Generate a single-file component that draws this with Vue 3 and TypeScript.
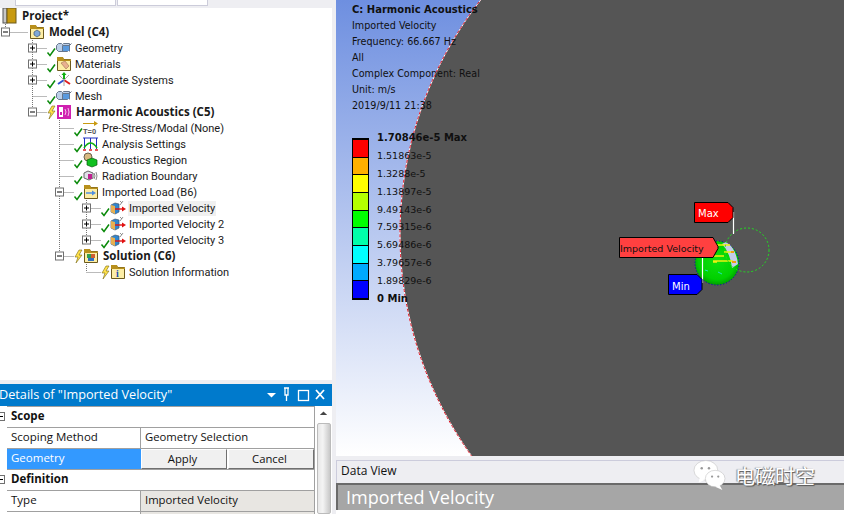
<script setup lang="ts">
interface TreeRow {
  level: number
  label: string
  icon: string
  toggle?: 'plus' | 'minus'
  status?: 'check' | 'bolt'
  bold?: boolean
  selected?: boolean
}

const rows: TreeRow[] = [
  { level: -1, label: 'Project*', icon: 'book', bold: true },
  { level: 0, label: 'Model (C4)', icon: 'model', toggle: 'minus', bold: true },
  { level: 1, label: 'Geometry', icon: 'cubes', toggle: 'plus', status: 'check' },
  { level: 1, label: 'Materials', icon: 'materials', toggle: 'plus', status: 'check' },
  { level: 1, label: 'Coordinate Systems', icon: 'axes', toggle: 'plus', status: 'check' },
  { level: 1, label: 'Mesh', icon: 'cubes', status: 'check' },
  { level: 1, label: 'Harmonic Acoustics (C5)', icon: 'harmonic', toggle: 'minus', status: 'bolt', bold: true },
  { level: 2, label: 'Pre-Stress/Modal (None)', icon: 'prestress', status: 'check' },
  { level: 2, label: 'Analysis Settings', icon: 'settings', status: 'check' },
  { level: 2, label: 'Acoustics Region', icon: 'region', status: 'check' },
  { level: 2, label: 'Radiation Boundary', icon: 'radiation', status: 'check' },
  { level: 2, label: 'Imported Load (B6)', icon: 'load', toggle: 'minus', status: 'check' },
  { level: 3, label: 'Imported Velocity', icon: 'velocity', toggle: 'plus', status: 'check', selected: true },
  { level: 3, label: 'Imported Velocity 2', icon: 'velocity', toggle: 'plus', status: 'check' },
  { level: 3, label: 'Imported Velocity 3', icon: 'velocity', toggle: 'plus', status: 'check' },
  { level: 2, label: 'Solution (C6)', icon: 'solution', toggle: 'minus', status: 'bolt', bold: true },
  { level: 3, label: 'Solution Information', icon: 'info', status: 'bolt' }
]

const elbowX = (level: number) => 5.5 + 27 * level
const iconX = (level: number) => 29 + 27 * level

// true when another sibling at this level still follows row i
const continues = (i: number, level: number) => {
  for (let k = i + 1; k < rows.length; k++) {
    if (rows[k].level < level) return false
    if (rows[k].level === level) return true
  }
  return false
}

const guidePath = (i: number) => {
  const row = rows[i]
  if (row.level < 0) return ''
  let d = ''
  for (let a = 0; a < row.level; a++) {
    if (continues(i, a)) d += `M${elbowX(a)} 0V16`
  }
  const x = elbowX(row.level)
  d += `M${x} 0V${continues(i, row.level) ? 16 : 8}`
  d += `M${x} 8.5H${iconX(row.level) - (row.status ? 9 : 1)}`
  return d
}

const scale = ['#ff0000', '#ffb000', '#ffff00', '#b4ff00', '#00ff00', '#00ffaa', '#00ffff', '#00aaff', '#0000ff']
const legend = [
  '1.70846e-5 Max', '1.51863e-5', '1.3288e-5', '1.13897e-5', '9.49143e-6',
  '7.59315e-6', '5.69486e-6', '3.79657e-6', '1.89829e-6', '0 Min'
]
const info = [
  'Imported Velocity', 'Frequency: 66.667 Hz', 'All',
  'Complex Component: Real', 'Unit: m/s', '2019/9/11 21:38'
]
</script>

<template>
  <div class="app">
    <svg class="defs" width="0" height="0">
      <defs>
        <symbol id="folder" viewBox="0 0 16 16">
          <path d="M1.5 3.5V1.5h5l1 2h7v11h-13z" fill="#fdeea6" stroke="#6d5a1c" />
          <path d="M1 1h6l1 2.5h7V5H1z" fill="#b8901c" />
        </symbol>
        <symbol id="book" viewBox="0 0 16 16">
          <rect x="1" y="0" width="4" height="15" fill="#c8c8c8" stroke="#555" />
          <rect x="5" y="0" width="9" height="15" fill="#c89a10" stroke="#6d5a1c" />
        </symbol>
        <symbol id="cube" viewBox="0 0 16 16">
          <path d="M0.500 5.500l2-2h3l1 1 1-1h6v6l-2 2H2.500l-2-2z" fill="#bccfe8" stroke="#66768c" />
          <path d="M6.500 5.500h7v6M13.500 5.500l2-2M6.500 5.500v6" fill="none" stroke="#66768c" />
          <rect x="7" y="6" width="6" height="5" fill="#5a9ade" />
        </symbol>
      </defs>
    </svg>

    <div class="left">
      <div class="top-strip">
        <div class="strip-box first"></div>
        <div class="strip-box"></div>
      </div>

      <div class="tree">
        <div v-for="(row, i) in rows" :key="i" class="tree-row">
          <svg class="gutter" :width="iconX(row.level) + 16" height="16">
            <path :d="guidePath(i)" class="guide" />
            <g v-if="row.toggle" :transform="`translate(${elbowX(row.level) - 4.5} 3.5)`">
              <rect x="0.5" y="0.5" width="8" height="8" fill="#fff" stroke="#707070" />
              <path d="M2 4.500h5" stroke="#000" />
              <path v-if="row.toggle === 'plus'" d="M4.500 2v5" stroke="#000" />
            </g>
            <g v-if="row.status" :transform="`translate(${iconX(row.level) - 9} 0)`">
              <path
                v-if="row.status === 'check'"
                d="M0.500 12.500l2.500 3 5-7"
                fill="none"
                stroke="#0a8a0a"
                stroke-width="1.500"
              />
              <path
                v-else
                d="M5 2L1 9h3l-2 6 6-8H5l3-5z"
                fill="#ffe14a"
                stroke="#7a6a10"
                stroke-width="0.600"
              />
            </g>
            <g :transform="`translate(${iconX(row.level)} 0)`">
              <use v-if="row.icon === 'book'" href="#book" width="16" height="16" />
              <template v-else-if="row.icon === 'model'">
                <use href="#folder" width="16" height="16" />
                <path d="M5 8l3-2 3 2v3l-3 2-3-2z" fill="#7fa8d8" stroke="#44566c" stroke-width="0.700" />
              </template>
              <use v-else-if="row.icon === 'cubes'" href="#cube" width="16" height="16" />
              <template v-else-if="row.icon === 'materials'">
                <use href="#folder" width="16" height="16" />
                <path d="M5 7l4-2 4 5-3 3z" fill="#e8b090" stroke="#a07050" stroke-width="0.600" />
              </template>
              <template v-else-if="row.icon === 'axes'">
                <path d="M8 8V2" stroke="#10b010" stroke-width="2" />
                <path d="M8 0l2.500 3h-5z" fill="#10b010" />
                <path d="M8 8l6 4" stroke="#e02020" stroke-width="2" />
                <path d="M8 8l-6 4" stroke="#3050d0" stroke-width="2" />
                <path d="M8 8L3 3M8 8l5-5M8 8v6" stroke="#a8a8a8" />
              </template>
              <template v-else-if="row.icon === 'harmonic'">
                <rect x="1" y="1" width="14" height="14" fill="#d020b0" />
                <rect x="3" y="3" width="4" height="10" fill="#fff" />
                <rect x="4" y="8" width="2" height="3" fill="#d020b0" />
                <path d="M9 5q2 3 0 6M12 4q2 4 0 8" fill="none" stroke="#f4c0ea" />
              </template>
              <template v-else-if="row.icon === 'prestress'">
                <path d="M0 3.500h12" stroke="#c89a10" />
                <path d="M11 1l4 2.500-4 2.500z" fill="#c89a10" />
                <text x="0" y="14" class="t0">T=0</text>
              </template>
              <template v-else-if="row.icon === 'settings'">
                <path d="M1.500 2v11M7.500 2v11M13.500 2v11M0 2h15" stroke="#2030c0" />
                <path d="M1 12q6.500-10 13 0" fill="none" stroke="#10b010" stroke-width="1.500" />
                <path d="M0 14h3M6 14h3M12 14h3" stroke="#e02020" stroke-width="1.500" />
              </template>
              <template v-else-if="row.icon === 'region'">
                <circle cx="5" cy="5" r="4" fill="#d8b880" stroke="#6b6050" />
                <path d="M4 8l5-2 5 2v5l-5 2-5-2z" fill="#10c020" stroke="#0a5a10" stroke-width="0.700" />
              </template>
              <template v-else-if="row.icon === 'radiation'">
                <path d="M1 5l4-2 5 2v5l-4 2-5-2z" fill="#e0e0e8" stroke="#666" />
                <rect x="5" y="6" width="4" height="5" fill="#c02090" />
                <path d="M11 5q2 3 0 6M13 4q2 4 0 8" fill="none" stroke="#888" />
              </template>
              <template v-else-if="row.icon === 'load'">
                <use href="#folder" width="16" height="16" />
                <path d="M3 9h7" stroke="#4f8fe0" stroke-width="1.500" />
                <path d="M9 6.500l4 2.500-4 2.500z" fill="#4f8fe0" />
              </template>
              <template v-else-if="row.icon === 'velocity'">
                <path d="M1 5l4-2 4 1v8l-4 2-4-2z" fill="#2f86d0" stroke="#44566c" stroke-width="0.700" />
                <path d="M1 5v7l4 2V6z" fill="#e8b050" />
                <path d="M5 9h9" stroke="#e01010" stroke-width="1.400" />
                <path d="M12 6.500l4 2.500-4 2.500z" fill="#e01010" />
                <path d="M10 1l2 2M13 1l-3 4" stroke="#777" stroke-width="0.800" />
              </template>
              <template v-else-if="row.icon === 'solution'">
                <use href="#folder" width="16" height="16" />
                <rect x="4" y="6" width="4" height="4" fill="#30a050" />
                <rect x="8" y="6" width="4" height="4" fill="#d06030" />
                <rect x="5" y="10" width="6" height="3" fill="#3070c0" />
              </template>
              <template v-else-if="row.icon === 'info'">
                <use href="#folder" width="16" height="16" />
                <text x="6" y="13" class="info-i">i</text>
              </template>
            </g>
          </svg>
          <span class="tree-label" :class="{ bold: row.bold, selected: row.selected }">{{ row.label }}</span>
        </div>
      </div>

      <div class="details">
        <div class="details-head">
          <span class="details-title">Details of "Imported Velocity"</span>
          <span class="grip"></span>
          <svg width="66" height="22" viewBox="0 0 66 22" class="details-tools">
            <path d="M1 9h9l-4.500 4.500z" fill="#fff" />
            <path d="M18 4h5M19 4v7h3V4M20.500 11v6" fill="none" stroke="#fff" stroke-width="1.300" />
            <rect x="32.500" y="6.500" width="10" height="10" fill="none" stroke="#fff" stroke-width="1.300" />
            <path d="M50 6l8 9M58 6l-8 9" stroke="#fff" stroke-width="1.800" />
          </svg>
        </div>
        <div class="details-body">
          <div class="gutter-col">
            <span class="mini"></span>
            <span class="mini second"></span>
          </div>
          <div class="grid">
            <div class="section">Scope</div>
            <div class="cell name">Scoping Method</div>
            <div class="cell">Geometry Selection</div>
            <div class="cell name active">Geometry</div>
            <div class="cell buttons">
              <button class="btn">Apply</button>
              <button class="btn">Cancel</button>
            </div>
            <div class="section">Definition</div>
            <div class="cell name">Type</div>
            <div class="cell readonly">Imported Velocity</div>
            <div class="cell name"></div>
            <div class="cell readonly"></div>
          </div>
          <div class="scrollbar">
            <svg width="15" height="16" viewBox="0 0 15 16">
              <path d="M3.500 10l4-4 4 4z" fill="#444" />
            </svg>
            <div class="thumb"></div>
          </div>
        </div>
      </div>
    </div>

    <div class="right">
      <div class="viewport">
        <svg class="scene" width="508" height="456" viewBox="336 0 508 456">
          <defs>
            <linearGradient id="sky" x1="0" y1="0" x2="0" y2="1">
              <stop offset="0" stop-color="#6e8fe0" />
              <stop offset="1" stop-color="#ffffff" />
            </linearGradient>
            <radialGradient id="ball" cx="0.5" cy="0.45" r="0.6">
              <stop offset="0" stop-color="#10e010" />
              <stop offset="0.7" stop-color="#00d000" />
              <stop offset="1" stop-color="#008a00" />
            </radialGradient>
          </defs>
          <rect x="336" y="0" width="508" height="456" fill="url(#sky)" />
          <circle cx="780" cy="234" r="380" fill="#555555" />
          <circle cx="780" cy="234" r="380" fill="none" stroke="#fff" />
          <circle cx="780" cy="234" r="380" fill="none" stroke="#e01020" stroke-dasharray="3 2" />

          <circle cx="717" cy="263" r="22" fill="url(#ball)" stroke="#0000c0" stroke-dasharray="1 2" />
          <path d="M726 242q10 6 12 22l-6 4q-2-16-10-24z" fill="#c4cce8" />
          <path d="M716 245h14M712 256h12M713 262h4M713 261h20M724 252h8" stroke="#f0f010" stroke-width="1.500" />
          <path d="M731 252h3M732 262h4" stroke="#f0a010" stroke-width="2" />
          <path d="M718 272l4 2M705 270l3 1" stroke="#20e0c0" />
          <circle cx="747" cy="250" r="22" fill="none" stroke="#20e020" stroke-dasharray="2 2" />

          <path d="M733.500 212V234" stroke="#fff" stroke-width="1.200" />
          <path d="M702.500 245V283" stroke="#fff" stroke-width="1.200" />
          <path d="M706 242h4" stroke="#fff" stroke-width="1.200" />

          <path d="M694.500 202.500H728l5 5v10l-5 5H694.500z" fill="#ff0000" stroke="#000" />
          <text x="698" y="217" class="flag white">Max</text>

          <path d="M619.500 237.500H713l5 9v2l-5 9H619.500z" fill="#ff4040" stroke="#000" />
          <text x="620" y="252" class="flag">Imported Velocity</text>

          <path d="M668.500 274.500H697l5 5v10l-5 5H668.500z" fill="#0000ff" stroke="#000" />
          <text x="672" y="290" class="flag white">Min</text>
        </svg>

        <div class="annotation">
          <div class="ann-title">C: Harmonic Acoustics</div>
          <div v-for="line in info" :key="line" class="ann-line">{{ line }}</div>
        </div>

        <div class="legend">
          <div class="bar">
            <span v-for="c in scale" :key="c" class="band" :style="{ background: c }"></span>
          </div>
          <div class="ticks">
            <span v-for="(t, i) in legend" :key="t" class="tick" :class="{ strong: i === 0 || i === 9 }">{{ t }}</span>
          </div>
        </div>
      </div>

      <div class="data-view">
        <div class="dv-head">
          <span>Data View</span>
          <span class="grip dark"></span>
        </div>
        <div class="dv-title">Imported Velocity</div>
        <div class="watermark">
          <svg width="34" height="31" viewBox="0 0 32 30">
            <ellipse cx="12" cy="10" rx="11.500" ry="9.500" fill="#fff" stroke="#bbb" stroke-width="0.500" />
            <path d="M6 17l-1 5 6-3z" fill="#fff" />
            <circle cx="8" cy="8" r="1.200" fill="#999" />
            <circle cx="15" cy="8" r="1.200" fill="#999" />
            <ellipse cx="21" cy="18" rx="9.500" ry="8" fill="#fff" stroke="#bbb" stroke-width="0.500" />
            <path d="M25 24l3 5-7-3z" fill="#fff" />
            <circle cx="18" cy="16" r="1.100" fill="#999" />
            <circle cx="24" cy="16" r="1.100" fill="#999" />
          </svg>
          <span class="wm-text">电磁时空</span>
        </div>
      </div>
    </div>
  </div>
</template>

<style scoped>
.app {
  width: 844px;
  height: 514px;
  display: grid;
  grid-template-columns: 336px 508px;
  background: #eeeef2;
  overflow: hidden;
  font-family: "Open Sans", "Liberation Sans", sans-serif;
  font-size: 11.5px;
  color: #111;
  position: relative;
}

.defs {
  position: absolute;
}

.left {
  display: flex;
  flex-direction: column;
  width: 332px;
  height: 514px;
}

.top-strip {
  height: 8px;
  display: flex;
  padding-left: 15px;
}

.strip-box {
  width: 89px;
  height: 5px;
  background: #fff;
  border: 1px solid #ccccda;
  border-top: 0;
  margin-right: 1px;
}

.strip-box.first {
  width: 99px;
}

.tree {
  height: 372px;
  background: #fff;
}

.tree-row {
  display: flex;
  height: 16px;
  align-items: center;
  white-space: nowrap;
  line-height: 15px;
}

.gutter {
  flex: none;
  overflow: visible;
}

.guide {
  fill: none;
  stroke: #777;
  stroke-dasharray: 1 1;
}

.tree-label {
  margin-left: 2px;
  padding: 0 1px;
  color: #1a1a1a;
  font-family: Roboto, sans-serif;
  font-size: 11px;
}

.tree-label.bold {
  font-family: "Open Sans", sans-serif;
  font-size: 11.5px;
  font-weight: 700;
  margin-left: 3px;
  margin-bottom: 2px;
}

.tree-label.selected {
  background: #f0f0f0;
}

.t0 {
  font: 700 7.500px "Liberation Sans", sans-serif;
  fill: #555;
}

.info-i {
  font: 700 10px "Liberation Serif", serif;
  fill: #2050b0;
}

.details {
  margin-top: 4px;
  height: 130px;
  background: #fff;
  display: flex;
  flex-direction: column;
}

.details-head {
  height: 22px;
  background: #007acc;
  display: flex;
  align-items: center;
  color: #fff;
  font-size: 12.700px;
  flex: none;
}

.details-title {
  white-space: nowrap;
  margin-left: -1px;
  margin-bottom: 2px;
}

.grip {
  flex: 1;
  height: 6px;
  margin: 0 2px 0 6px;
  background-image: radial-gradient(rgba(255, 255, 255, 0.55) 0.6px, transparent 0.7px);
  background-size: 2px 2px;
}

.details-tools {
  flex: none;
}

.details-body {
  flex: 1;
  display: flex;
  min-height: 0;
}

.gutter-col {
  width: 7px;
  flex: none;
  position: relative;
}

.mini {
  position: absolute;
  left: -4px;
  top: 6px;
  width: 9px;
  height: 9px;
  box-sizing: border-box;
  border: 1px solid #707070;
  background: linear-gradient(#000, #000) center / 5px 1px no-repeat #fff;
}

.mini.second {
  top: 69px;
}

.grid {
  width: 308px;
  flex: none;
  display: grid;
  grid-template-columns: 134px 174px;
  grid-auto-rows: 21px;
  border-top: 1px solid #a0a0a0;
  overflow: hidden;
  align-content: start;
}

.section {
  grid-column: 1 / 3;
  font-weight: 700;
  padding-left: 4px;
  line-height: 18px;
  border-bottom: 1px solid #a0a0a0;
  border-right: 1px solid #a0a0a0;
  box-sizing: border-box;
}

.cell {
  padding-left: 4px;
  line-height: 18px;
  border-bottom: 1px solid #a0a0a0;
  border-right: 1px solid #a0a0a0;
  box-sizing: border-box;
  white-space: nowrap;
  font-size: 11.300px;
}

.cell.name {
  padding-left: 4px;
  font-size: 11.500px;
}

.cell.active {
  background: #3399ff;
  color: #fff;
  border-right: 0;
}

.cell.readonly {
  background: #e8e6e2;
}

.cell.buttons {
  display: flex;
  padding: 0;
  gap: 1px;
}

.btn {
  flex: 1;
  font: inherit;
  padding: 0 3px 3px 0;
  height: 20px;
  color: #111;
  background: #f0f0f0;
  border: 1px solid;
  border-color: #fff #707070 #707070 #fff;
}

.scrollbar {
  width: 15px;
  margin-left: 1px;
  flex: none;
  display: flex;
  flex-direction: column;
  align-items: center;
}

.thumb {
  width: 14px;
  height: 100px;
  margin-top: 2px;
  background: linear-gradient(90deg, #e8e8e8, #f4f4f4 40%, #c8c8c8);
  border: 1px solid #bbb;
  border-radius: 2px;
  box-sizing: border-box;
}

.right {
  display: flex;
  flex-direction: column;
  height: 514px;
}

.viewport {
  height: 456px;
  position: relative;
  overflow: hidden;
  flex: none;
}

.scene {
  display: block;
}

.flag {
  font: 9.500px "DejaVu Sans", sans-serif;
  fill: #111;
}

.flag.white {
  fill: #fff;
  font-size: 10px;
}

.annotation {
  position: absolute;
  left: 16px;
  top: 2px;
  font-family: "DejaVu Sans", sans-serif;
  font-size: 9.600px;
  line-height: 16px;
  color: #101010;
}

.ann-title {
  font-weight: 700;
  font-size: 10px;
}

.legend {
  position: absolute;
  left: 16px;
  top: 138px;
  display: flex;
}

.bar {
  width: 17px;
  display: flex;
  flex-direction: column;
  border: 1px solid #000;
  border-top-width: 2px;
  border-bottom-width: 2px;
  box-sizing: border-box;
  height: 162px;
}

.band {
  flex: 1;
  border-bottom: 1px solid #000;
}

.band:last-child {
  border-bottom: 0;
}

.ticks {
  margin-left: 8px;
  margin-top: -9px;
  display: flex;
  flex-direction: column;
  font-family: "DejaVu Sans", sans-serif;
  font-size: 9.500px;
  color: #101010;
}

.tick {
  height: 17.900px;
  line-height: 18px;
  white-space: nowrap;
}

.tick.strong {
  font-weight: 700;
  font-size: 10px;
}

.data-view {
  margin-top: 4px;
  position: relative;
  flex: 1;
  background: #fff;
  display: flex;
  flex-direction: column;
}

.dv-head {
  height: 23px;
  flex: none;
  background: #eeeef2;
  border-top: 1px solid #ccccdc;
  border-left: 1px solid #ccccdc;
  box-sizing: border-box;
  display: flex;
  align-items: center;
  padding: 0 0 4px 4px;
  font-size: 12px;
}

.grip.dark {
  background-image: radial-gradient(rgba(90, 90, 110, 0.6) 0.6px, transparent 0.7px);
  margin-left: 5px;
}

.dv-title {
  height: 27px;
  box-sizing: border-box;
  background: #a6a6a6;
  border-top: 2px solid #6a6a6a;
  border-left: 2px solid #6a6a6a;
  color: #fff;
  font-size: 18px;
  line-height: 24px;
  padding-left: 8px;
  flex: none;
}

.watermark {
  position: absolute;
  left: 357px;
  top: 0;
  display: flex;
  align-items: center;
  gap: 8px;
  height: 31px;
}

.wm-text {
  font-family: "Noto Sans CJK SC", sans-serif;
  font-size: 20px;
  color: #fff;
  text-shadow: 1px 1px 1px #555, -1px 0 1px #888;
}
</style>
